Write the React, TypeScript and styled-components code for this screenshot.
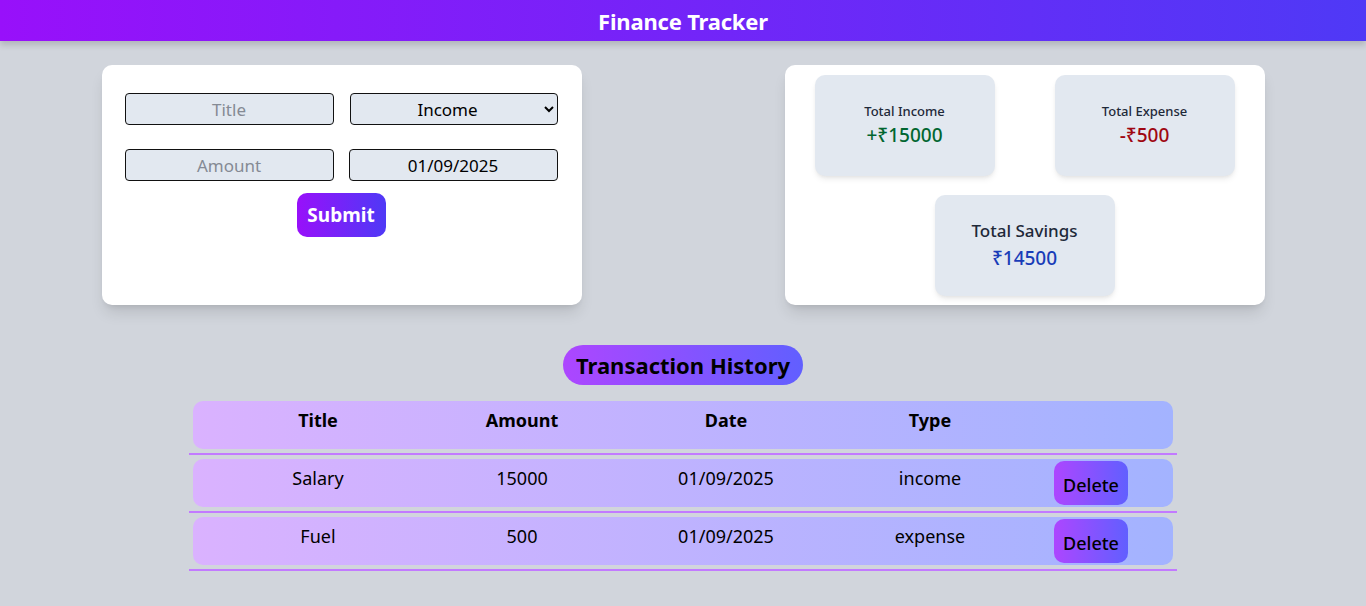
import React from "react";
import styled, { createGlobalStyle } from "styled-components";

const Global = createGlobalStyle`
  html, body { margin: 0; padding: 0; }
  body {
    background: #d1d5dc;
    font-family: "Noto Sans", "Open Sans", sans-serif;
    color: #000;
  }
  * { box-sizing: border-box; }
`;

const Page = styled.div`
  min-height: 606px;
  background: #d1d5dc;
`;

const Header = styled.header`
  height: 41px;
  display: flex;
  align-items: center;
  justify-content: center;
  background: linear-gradient(to right, #9810fa, #4f39f6);
  box-shadow: 0 4px 6px rgba(0, 0, 0, 0.15);
`;

const HeaderTitle = styled.h1`
  margin: 0;
  color: #fff;
  font-size: 22px;
  font-weight: 700;
  letter-spacing: -0.2px;
`;

const TopGrid = styled.div`
  display: grid;
  grid-template-columns: 1fr 1fr;
  justify-items: center;
  padding-top: 24px;
`;

const Panel = styled.section`
  width: 480px;
  height: 240px;
  background: #fff;
  border-radius: 10px;
  box-shadow: 0 10px 15px -3px rgba(0, 0, 0, 0.12), 0 4px 6px -4px rgba(0, 0, 0, 0.12);
`;

const FormPanel = styled(Panel)`
  padding: 28px 24px 0 23px;
  display: flex;
  flex-direction: column;
  align-items: center;
`;

const FieldGrid = styled.div`
  width: 100%;
  display: grid;
  grid-template-columns: 209px 209px;
  justify-content: space-between;
  row-gap: 24px;
`;

const Field = styled.input<{ $end?: boolean }>`
  width: 209px;
  height: 32px;
  border: 1px solid #111;
  border-radius: 4px;
  background: #e2e8f0;
  font-family: inherit;
  font-size: 17px;
  text-align: center;
  color: #000;
  padding: 0 6px;
  outline: none;
  justify-self: ${(p) => (p.$end ? "end" : "start")};
  &::placeholder { color: #858a94; }
`;

const Select = styled.select`
  width: 208px;
  height: 32px;
  border: 1px solid #111;
  border-radius: 4px;
  background: #e2e8f0;
  font-family: inherit;
  font-size: 17px;
  text-align: center;
  text-align-last: center;
  color: #000;
  justify-self: end;
`;

const SubmitButton = styled.button`
  margin-top: 12px;
  width: 89px;
  height: 44px;
  border: none;
  border-radius: 10px;
  background: linear-gradient(to right, #9810fa, #4f39f6);
  color: #fff;
  font-family: inherit;
  font-size: 19px;
  font-weight: 700;
  cursor: pointer;
`;

const StatsPanel = styled(Panel)`
  padding: 10px 30px 9px;
  display: grid;
  grid-template-columns: 180px 180px;
  justify-content: space-between;
  row-gap: 19px;
`;

const StatCard = styled.div<{ $wide?: boolean }>`
  width: 180px;
  height: 101px;
  border-radius: 10px;
  background: #e2e8f0;
  box-shadow: 0 4px 6px -1px rgba(0, 0, 0, 0.08), 0 2px 4px -2px rgba(0, 0, 0, 0.08);
  display: flex;
  flex-direction: column;
  align-items: center;
  justify-content: center;
  grid-column: ${(p) => (p.$wide ? "1 / -1" : "auto")};
  justify-self: center;
`;

const StatLabel = styled.div<{ $big?: boolean }>`
  font-size: ${(p) => (p.$big ? "17px" : "13px")};
  font-weight: 500;
  color: #1e2939;
  line-height: 1.3;
  margin-bottom: ${(p) => (p.$big ? "4px" : "3px")};
`;

const StatValue = styled.div<{ $color: string }>`
  font-size: 19px;
  font-weight: 500;
  color: ${(p) => p.$color};
  line-height: 1.3;
`;

const HistorySection = styled.section`
  display: flex;
  flex-direction: column;
  align-items: center;
  padding-top: 40px;
`;

const HistoryTitle = styled.h2`
  margin: 0 0 12px;
  height: 40px;
  padding: 0 13px;
  display: flex;
  align-items: center;
  border-radius: 9999px;
  background: linear-gradient(to right, #ad46ff, #615fff);
  font-size: 22px;
  font-weight: 700;
  color: #000;
`;

const Table = styled.div`
  width: 988px;
`;

const RowWrap = styled.div`
  padding: 4px;
  border-bottom: 2px solid #c27aff;
`;

const Row = styled.div<{ $head?: boolean }>`
  height: 48px;
  border-radius: 10px;
  background: linear-gradient(to right, #dab2ff, #a3b3ff);
  display: grid;
  grid-template-columns: 204px 204px 204px 204px 118px;
  padding: 0 23px;
  align-items: center;
  font-size: 18px;
  font-weight: ${(p) => (p.$head ? 700 : 400)};
`;

const Cell = styled.div`
  text-align: center;
  padding-bottom: 10px;
  white-space: nowrap;
`;

const ActionCell = styled.div`
  display: flex;
  justify-content: center;
`;

const DeleteButton = styled.button`
  width: 74px;
  height: 44px;
  border: none;
  border-radius: 10px;
  background: linear-gradient(to right, #ad46ff, #615fff);
  font-family: inherit;
  font-size: 18px;
  font-weight: 500;
  color: #000;
  padding: 3px 0 0;
  cursor: pointer;
`;

const transactions = [
  { title: "Salary", amount: "15000", date: "01/09/2025", type: "income" },
  { title: "Fuel", amount: "500", date: "01/09/2025", type: "expense" },
];

export default function App() {
  return (
    <Page>
      <Global />
      <Header>
        <HeaderTitle>Finance Tracker</HeaderTitle>
      </Header>
      <TopGrid>
        <FormPanel>
          <FieldGrid>
            <Field placeholder="Title" />
            <Select defaultValue="income">
              <option value="income">Income</option>
              <option value="expense">Expense</option>
            </Select>
            <Field placeholder="Amount" />
            <Field defaultValue="01/09/2025" $end />
          </FieldGrid>
          <SubmitButton>Submit</SubmitButton>
        </FormPanel>
        <StatsPanel>
          <StatCard>
            <StatLabel>Total Income</StatLabel>
            <StatValue $color="#016630">+₹15000</StatValue>
          </StatCard>
          <StatCard>
            <StatLabel>Total Expense</StatLabel>
            <StatValue $color="#9f0712">-₹500</StatValue>
          </StatCard>
          <StatCard $wide>
            <StatLabel $big>Total Savings</StatLabel>
            <StatValue $color="#193cb8">₹14500</StatValue>
          </StatCard>
        </StatsPanel>
      </TopGrid>
      <HistorySection>
        <HistoryTitle>Transaction History</HistoryTitle>
        <Table>
          <RowWrap>
            <Row $head>
              <Cell>Title</Cell>
              <Cell>Amount</Cell>
              <Cell>Date</Cell>
              <Cell>Type</Cell>
              <Cell />
            </Row>
          </RowWrap>
          {transactions.map((t) => (
            <RowWrap key={t.title}>
              <Row>
                <Cell>{t.title}</Cell>
                <Cell>{t.amount}</Cell>
                <Cell>{t.date}</Cell>
                <Cell>{t.type}</Cell>
                <ActionCell>
                  <DeleteButton>Delete</DeleteButton>
                </ActionCell>
              </Row>
            </RowWrap>
          ))}
        </Table>
      </HistorySection>
    </Page>
  );
}
